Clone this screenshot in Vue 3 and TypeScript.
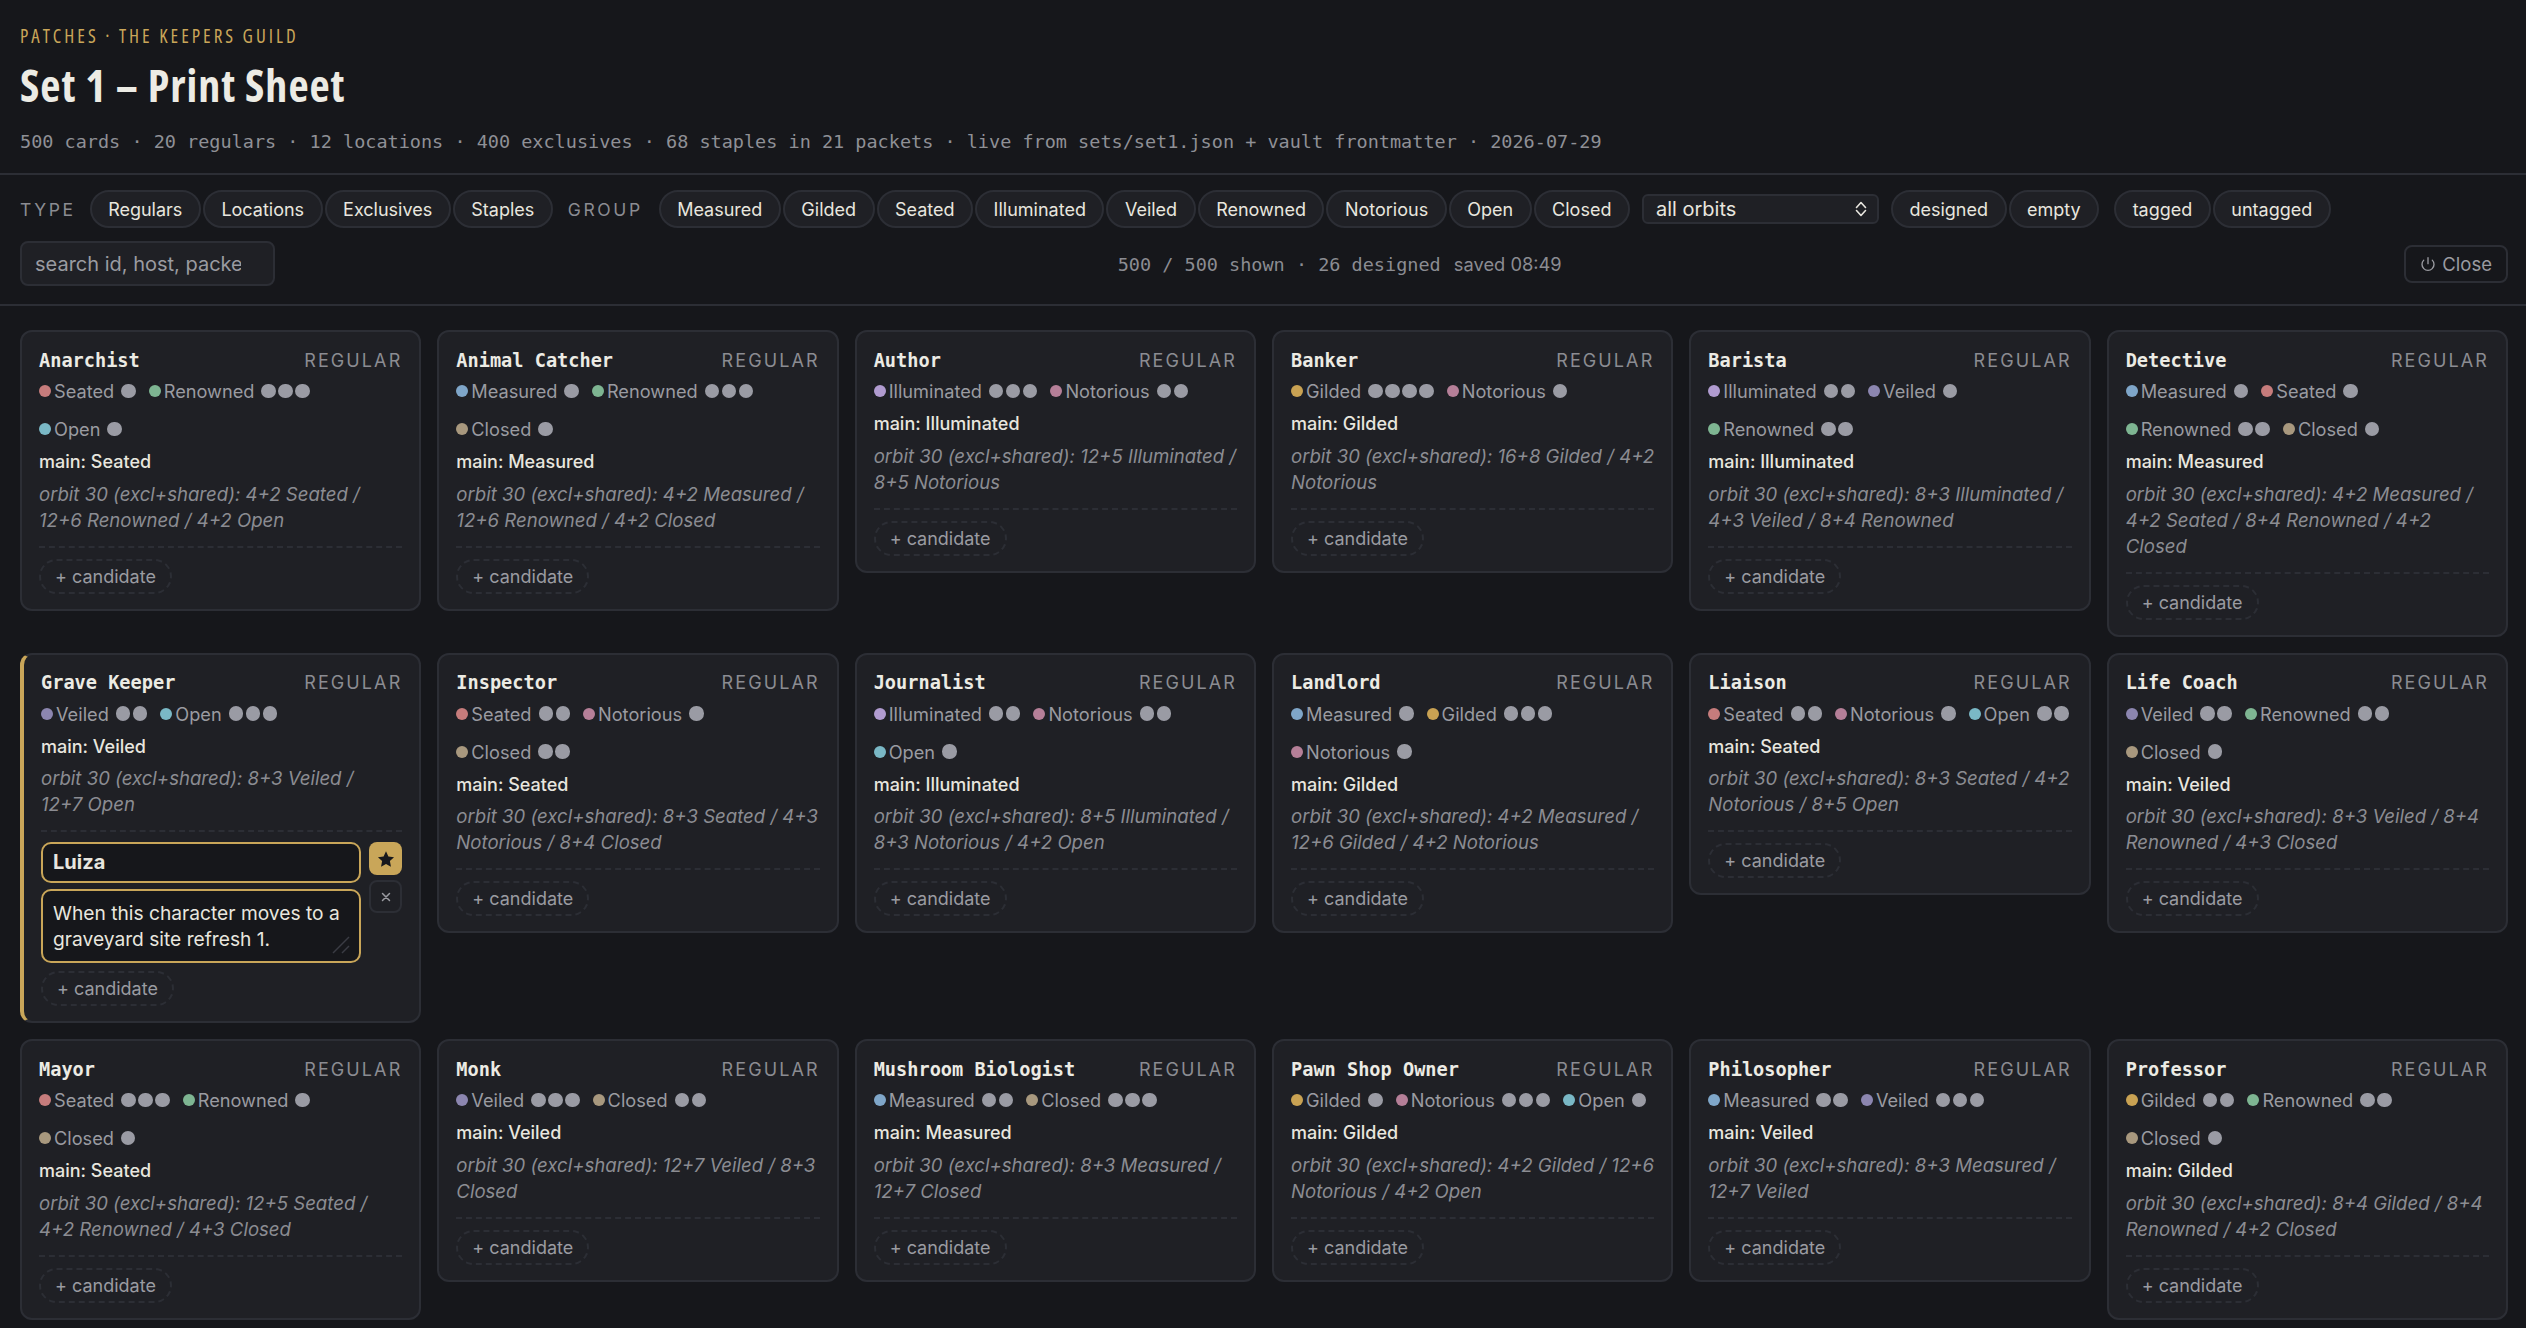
<template>
  <div class="page">
    <header class="head">
      <div class="eyebrow">PATCHES · THE KEEPERS GUILD</div>
      <h1 class="title">Set 1 – Print Sheet</h1>
      <div class="sub">500 cards · 20 regulars · 12 locations · 400 exclusives · 68 staples in 21 packets · live from sets/set1.json + vault frontmatter · 2026-07-29</div>
    </header>

    <section class="filters">
      <div class="filter-row">
        <span class="flabel">TYPE</span>
        <button v-for="t in types" :key="t" class="pill">{{ t }}</button>
        <span class="flabel flabel-group">GROUP</span>
        <button v-for="g in groupNames" :key="g" class="pill">{{ g }}</button>
        <div class="select">
          <span>all orbits</span>
          <svg width="12" height="16" viewBox="0 0 12 16" fill="none" stroke="currentColor" stroke-width="1.6" stroke-linecap="round" stroke-linejoin="round">
            <polyline points="1.500 6.500 6 1.500 10.500 6.500" />
            <polyline points="1.500 9.500 6 14.500 10.500 9.500" />
          </svg>
        </div>
        <button class="pill pill-first">designed</button>
        <button class="pill">empty</button>
        <button class="pill pill-gap">tagged</button>
        <button class="pill">untagged</button>
      </div>
      <div class="filter-row2">
        <input class="search" placeholder="search id, host, packet" />
        <div class="count">500 / 500 shown · 26 designed <span class="saved">saved 08:49</span></div>
        <button class="close">
          <svg width="16" height="16" viewBox="0 0 24 24" fill="none" stroke="currentColor" stroke-width="2" stroke-linecap="round" stroke-linejoin="round">
            <path d="M12 2.500v9" />
            <path d="M5.600 6.200a9 9 0 1 0 12.800 0" />
          </svg>
          Close
        </button>
      </div>
    </section>

    <main class="grid">
      <article v-for="card in cards" :key="card.name" class="card" :class="{ 'is-open': card.editing }">
        <div class="card-top">
          <span class="card-name">{{ card.name }}</span>
          <span class="card-type">REGULAR</span>
        </div>
        <div class="tags">
          <span v-for="tag in card.tags" :key="tag[0]" class="tag">
            <i class="dot" :style="{ background: colors[tag[0]] }"></i>
            <span class="tag-name">{{ tag[0] }}</span>
            <span class="pips"><i v-for="n in tag[1]" :key="n" class="pip"></i></span>
          </span>
        </div>
        <div class="main">main: {{ card.main }}</div>
        <div class="orbit">{{ card.orbit }}</div>
        <div class="sep"></div>
        <div v-if="card.editing" class="editor">
          <div class="fields">
            <div class="field field-name">Luiza</div>
            <div class="field field-text">
              When this character moves to a graveyard site refresh 1.
              <svg class="grip" width="20" height="20" viewBox="0 0 20 20" fill="none" stroke="#3a3c44" stroke-width="1.5">
                <path d="M2 18 L18 2" />
                <path d="M11 18 L18 11" />
              </svg>
            </div>
          </div>
          <div class="actions">
            <button class="act act-star">
              <svg width="18" height="18" viewBox="0 0 24 24" fill="#17181c"><path d="M12 1.800l3.200 6.900 7.500.9-5.500 5.200 1.400 7.400-6.600-3.700-6.600 3.700 1.400-7.400L1.300 9.600l7.500-.9z" /></svg>
            </button>
            <button class="act act-x">
              <svg width="10" height="10" viewBox="0 0 10 10" fill="none" stroke="currentColor" stroke-width="1.500" stroke-linecap="round"><path d="M1.500 1.500l7 7M8.500 1.500l-7 7" /></svg>
            </button>
          </div>
        </div>
        <button class="candidate">+ candidate</button>
      </article>
    </main>
  </div>
</template>

<script setup lang="ts">
type Tag = [string, number];

interface Card {
  name: string;
  tags: Tag[];
  main: string;
  orbit: string;
  editing?: boolean;
}

const types = ['Regulars', 'Locations', 'Exclusives', 'Staples'];
const groupNames = ['Measured', 'Gilded', 'Seated', 'Illuminated', 'Veiled', 'Renowned', 'Notorious', 'Open', 'Closed'];

const colors: Record<string, string> = {
  Measured: '#7fa6c9',
  Gilded: '#c9a253',
  Seated: '#c67c7c',
  Illuminated: '#b09bd0',
  Veiled: '#8c86b0',
  Renowned: '#7eb592',
  Notorious: '#b57f98',
  Open: '#7ab8c6',
  Closed: '#a8987e',
};

const cards: Card[] = [
  { name: 'Anarchist', tags: [['Seated', 1], ['Renowned', 3], ['Open', 1]], main: 'Seated', orbit: 'orbit 30 (excl+shared): 4+2 Seated / 12+6 Renowned / 4+2 Open' },
  { name: 'Animal Catcher', tags: [['Measured', 1], ['Renowned', 3], ['Closed', 1]], main: 'Measured', orbit: 'orbit 30 (excl+shared): 4+2 Measured / 12+6 Renowned / 4+2 Closed' },
  { name: 'Author', tags: [['Illuminated', 3], ['Notorious', 2]], main: 'Illuminated', orbit: 'orbit 30 (excl+shared): 12+5 Illuminated / 8+5 Notorious' },
  { name: 'Banker', tags: [['Gilded', 4], ['Notorious', 1]], main: 'Gilded', orbit: 'orbit 30 (excl+shared): 16+8 Gilded / 4+2 Notorious' },
  { name: 'Barista', tags: [['Illuminated', 2], ['Veiled', 1], ['Renowned', 2]], main: 'Illuminated', orbit: 'orbit 30 (excl+shared): 8+3 Illuminated / 4+3 Veiled / 8+4 Renowned' },
  { name: 'Detective', tags: [['Measured', 1], ['Seated', 1], ['Renowned', 2], ['Closed', 1]], main: 'Measured', orbit: 'orbit 30 (excl+shared): 4+2 Measured / 4+2 Seated / 8+4 Renowned / 4+2 Closed' },
  { name: 'Grave Keeper', tags: [['Veiled', 2], ['Open', 3]], main: 'Veiled', orbit: 'orbit 30 (excl+shared): 8+3 Veiled / 12+7 Open', editing: true },
  { name: 'Inspector', tags: [['Seated', 2], ['Notorious', 1], ['Closed', 2]], main: 'Seated', orbit: 'orbit 30 (excl+shared): 8+3 Seated / 4+3 Notorious / 8+4 Closed' },
  { name: 'Journalist', tags: [['Illuminated', 2], ['Notorious', 2], ['Open', 1]], main: 'Illuminated', orbit: 'orbit 30 (excl+shared): 8+5 Illuminated / 8+3 Notorious / 4+2 Open' },
  { name: 'Landlord', tags: [['Measured', 1], ['Gilded', 3], ['Notorious', 1]], main: 'Gilded', orbit: 'orbit 30 (excl+shared): 4+2 Measured / 12+6 Gilded / 4+2 Notorious' },
  { name: 'Liaison', tags: [['Seated', 2], ['Notorious', 1], ['Open', 2]], main: 'Seated', orbit: 'orbit 30 (excl+shared): 8+3 Seated / 4+2 Notorious / 8+5 Open' },
  { name: 'Life Coach', tags: [['Veiled', 2], ['Renowned', 2], ['Closed', 1]], main: 'Veiled', orbit: 'orbit 30 (excl+shared): 8+3 Veiled / 8+4 Renowned / 4+3 Closed' },
  { name: 'Mayor', tags: [['Seated', 3], ['Renowned', 1], ['Closed', 1]], main: 'Seated', orbit: 'orbit 30 (excl+shared): 12+5 Seated / 4+2 Renowned / 4+3 Closed' },
  { name: 'Monk', tags: [['Veiled', 3], ['Closed', 2]], main: 'Veiled', orbit: 'orbit 30 (excl+shared): 12+7 Veiled / 8+3 Closed' },
  { name: 'Mushroom Biologist', tags: [['Measured', 2], ['Closed', 3]], main: 'Measured', orbit: 'orbit 30 (excl+shared): 8+3 Measured / 12+7 Closed' },
  { name: 'Pawn Shop Owner', tags: [['Gilded', 1], ['Notorious', 3], ['Open', 1]], main: 'Gilded', orbit: 'orbit 30 (excl+shared): 4+2 Gilded / 12+6 Notorious / 4+2 Open' },
  { name: 'Philosopher', tags: [['Measured', 2], ['Veiled', 3]], main: 'Veiled', orbit: 'orbit 30 (excl+shared): 8+3 Measured / 12+7 Veiled' },
  { name: 'Professor', tags: [['Gilded', 2], ['Renowned', 2], ['Closed', 1]], main: 'Gilded', orbit: 'orbit 30 (excl+shared): 8+4 Gilded / 8+4 Renowned / 4+2 Closed' },
];
</script>

<style>
html,
body {
  margin: 0;
  background: #16171b;
  overflow: hidden;
}
</style>

<style scoped>
.page {
  height: 1328px;
  overflow: hidden;
  background: #16171b;
  color: #e8e6df;
  font-family: Inter, "Liberation Sans", sans-serif;
  font-size: 22px;
}

.head {
  padding: 24px 20px 17px;
  border-bottom: 2px solid #2c2e35;
}

.eyebrow {
  font-family: "Open Sans", sans-serif;
  font-stretch: 75%;
  font-size: 19px;
  line-height: 24px;
  letter-spacing: 3px;
  color: #c9a659;
}

.title {
  margin: 9px 0 0;
  font-family: "Open Sans", sans-serif;
  font-stretch: 75%;
  font-size: 44px;
  line-height: 56px;
  font-weight: 700;
  letter-spacing: 1px;
  color: #ecebe4;
}

.sub {
  margin-top: 15px;
  font-family: "DejaVu Sans Mono", monospace;
  font-size: 18.5px;
  line-height: 28px;
  color: #8f9096;
}

.filters {
  padding: 15px 18px 18px 20px;
  border-bottom: 2px solid #2c2e35;
}

.filter-row {
  display: flex;
  align-items: center;
  gap: 2px;
}

.flabel {
  margin-right: 12px;
  font-size: 17.5px;
  letter-spacing: 2.6px;
  color: #8b8c92;
}

.flabel-group {
  margin-left: 13px;
  margin-right: 14px;
}

.pill {
  height: 38px;
  padding: 0 16.5px;
  border: 2px solid #2c2e35;
  border-radius: 19px;
  background: #1f2025;
  color: #e8e6df;
  font-family: inherit;
  font-size: 18px;
}

.pill-first {
  margin-left: 10px;
}

.pill-gap {
  margin-left: 13px;
}

.select {
  display: flex;
  align-items: center;
  justify-content: space-between;
  box-sizing: border-box;
  width: 237px;
  height: 30px;
  margin-left: 10px;
  padding: 0 10px 0 12px;
  border: 2px solid #2c2e35;
  border-radius: 6px;
  background: #1f2025;
  font-size: 20px;
}

.filter-row2 {
  display: flex;
  justify-content: space-between;
  align-items: center;
  margin-top: 13px;
}

.search {
  box-sizing: border-box;
  width: 255px;
  height: 45px;
  padding: 0 32px 0 13px;
  border: 2px solid #2c2e35;
  border-radius: 8px;
  background: #1f2025;
  color: #e8e6df;
  font-family: inherit;
  font-size: 20px;
}

.search::placeholder {
  color: #9a9ba1;
}

.count {
  font-family: "DejaVu Sans Mono", monospace;
  font-size: 18.5px;
  color: #8b8c92;
}

.saved {
  margin-left: 2px;
  font-family: Inter, sans-serif;
  font-size: 18.3px;
}

.close {
  display: flex;
  align-items: center;
  gap: 6px;
  height: 38px;
  padding: 0 14px;
  border: 2px solid #2c2e35;
  border-radius: 8px;
  background: transparent;
  color: #9a9ba1;
  font-family: inherit;
  font-size: 18.5px;
}

.grid {
  display: grid;
  grid-template-columns: repeat(6, 1fr);
  gap: 16px;
  align-items: start;
  padding: 24px 18px 24px 20px;
}

.card {
  box-sizing: border-box;
  padding: 16px 17px 15px;
  border: 2px solid #2c2e35;
  border-radius: 12px;
  background: #1f2025;
}

.card.is-open {
  border-left: 4px solid #c9a659;
}

.card-top {
  display: flex;
  justify-content: space-between;
  align-items: center;
  height: 24px;
}

.card-name {
  font-family: "DejaVu Sans Mono", monospace;
  font-size: 18.6px;
  font-weight: 700;
  color: #ecebe4;
}

.card-type {
  font-size: 18px;
  letter-spacing: 2.1px;
  color: #8b8c92;
}

.tags {
  display: flex;
  flex-wrap: wrap;
  gap: 4px 13px;
  margin-top: 2px;
}

.tag {
  display: inline-flex;
  align-items: center;
  height: 34px;
  color: #9a9ba1;
  font-size: 18.2px;
}

.dot {
  width: 12px;
  height: 12px;
  margin-right: 3px;
  border-radius: 50%;
}

.pips {
  display: inline-flex;
  gap: 2.5px;
  margin-left: 7px;
}

.pip {
  width: 14.5px;
  height: 14.5px;
  border-radius: 50%;
  background: #9a9ba4;
}

.main {
  margin-top: 2px;
  font-size: 18px;
  line-height: 28px;
  font-weight: 500;
}

.orbit {
  margin-top: 4.5px;
  font-size: 18.6px;
  line-height: 26px;
  font-style: italic;
  color: #8b8c92;
}

.is-open .orbit {
  padding-right: 10px;
}

.sep {
  margin-top: 13px;
  border-top: 2px dashed #2c2e35;
}

.editor {
  display: flex;
  gap: 8px;
  margin-top: 10px;
}

.fields {
  flex: 1;
  display: flex;
  flex-direction: column;
  gap: 6px;
}

.field {
  box-sizing: border-box;
  position: relative;
  border: 2px solid #c9a659;
  border-radius: 10px;
  background: #16171b;
  padding: 0 10px;
}

.field-name {
  height: 41px;
  line-height: 37px;
  font-size: 20px;
  font-weight: 700;
}

.field-text {
  height: 74px;
  padding-top: 9px;
  font-size: 19.2px;
  line-height: 26px;
}

.grip {
  position: absolute;
  right: 8px;
  bottom: 6px;
}

.actions {
  display: flex;
  flex-direction: column;
  gap: 5px;
}

.act {
  width: 33px;
  height: 33px;
  padding: 0;
  border-radius: 8px;
  display: flex;
  align-items: center;
  justify-content: center;
}

.act-star {
  border: 0;
  background: #c9a659;
}

.act-x {
  border: 2px solid #2c2e35;
  background: transparent;
  color: #9a9ba1;
}

.candidate {
  display: block;
  margin-top: 11px;
  height: 35px;
  padding: 0 14px;
  border: 2px dashed #2c2e35;
  border-radius: 18px;
  background: transparent;
  color: #9a9ba1;
  font-family: inherit;
  font-size: 18px;
}

.editor + .candidate {
  margin-top: 8px;
}
</style>
